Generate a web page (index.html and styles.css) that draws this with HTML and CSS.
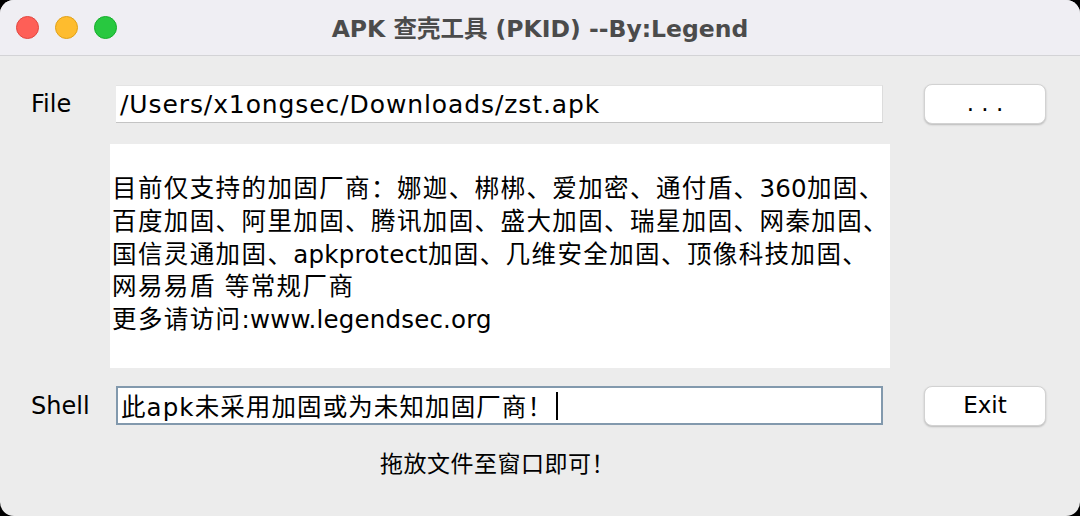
FILE: index.html
```html
<!DOCTYPE html>
<html lang="zh-CN">
<head>
<meta charset="utf-8">
<title>APK 查壳工具 (PKID) --By:Legend</title>
<link rel="stylesheet" href="styles.css">
</head>
<body>
<div class="window">
  <div class="titlebar">
    <div class="lights">
      <span class="light red"></span>
      <span class="light yellow"></span>
      <span class="light green"></span>
    </div>
    <div class="title">APK 查壳工具 (PKID) --By:Legend</div>
  </div>
  <div class="content">
    <div class="label row1">File</div>
    <div class="field row1">/Users/x1ongsec/Downloads/zst.apk</div>
    <div class="btn-cell row1"><button class="btn">. . .</button></div>

    <div class="info">
      <div>目前仅支持的加固厂商：娜迦、梆梆、爱加密、通付盾、<span class="lat">360</span>加固、</div>
      <div>百度加固、阿里加固、腾讯加固、盛大加固、瑞星加固、网秦加固、</div>
      <div>国信灵通加固、<span class="lat">apkprotect</span>加固、几维安全加固、顶像科技加固、</div>
      <div>网易易盾 等常规厂商</div>
      <div>更多请访问<span class="lat">:www.legendsec.org</span></div>
    </div>

    <div class="label row3">Shell</div>
    <div class="field focused row3">此apk未采用加固或为未知加固厂商！<span class="caret"></span></div>
    <div class="btn-cell row3"><button class="btn">Exit</button></div>

    <div class="hint">拖放文件至窗口即可！</div>
  </div>
</div>
</body>
</html>
```

FILE: styles.css
```css
html, body {
  margin: 0;
  padding: 0;
  background: #000;
}
body {
  width: 1080px;
  height: 516px;
  overflow: hidden;
  font-family: "DejaVu Sans", "Noto Sans CJK SC", sans-serif;
  color: #000;
}
.window {
  width: 1080px;
  height: 516px;
  background: #ececec;
  border-radius: 14px;
  overflow: hidden;
  display: flex;
  flex-direction: column;
}
.titlebar {
  height: 56px;
  flex: none;
  background: #efeef3;
  border-bottom: 1px solid #d3d3d6;
  box-sizing: border-box;
  display: flex;
  align-items: center;
  position: relative;
}
.lights {
  display: flex;
  gap: 16px;
  padding-left: 16px;
}
.light {
  width: 23px;
  height: 23px;
  border-radius: 50%;
  box-sizing: border-box;
  display: block;
}
.red { background: #fe5f57; border: 1px solid #e2463f; }
.yellow { background: #febc2e; border: 1px solid #e1a116; }
.green { background: #28c840; border: 1px solid #14ae2a; }
.title {
  position: absolute;
  left: 0;
  right: 0;
  top: 0;
  bottom: 0;
  display: flex;
  align-items: center;
  justify-content: center;
  font-weight: bold;
  font-size: 23.5px;
  color: #4b4b4b;
  padding-bottom: 2px;
  pointer-events: none;
}
.content {
  display: grid;
  grid-template-columns: 116px 767px 1fr;
  grid-template-rows: 42px 224px 40px auto;
  row-gap: 18px;
  padding-top: 28px;
}
.row1 { grid-row: 1; align-self: start; }
.row3 { grid-row: 3; }
.label {
  grid-column: 1;
  height: 40px;
  padding-left: 31px;
  font-size: 24px;
  display: flex;
  align-items: center;
}
.field {
  grid-column: 2;
  height: 38px;
  margin-top: 1px;
  background: #fff;
  border-top: 1px solid #e4e4e4;
  border-right: 1px solid #dcdcdc;
  border-bottom: 1px solid #c4c4c4;
  box-sizing: border-box;
  display: flex;
  align-items: center;
  padding-left: 4px;
  font-size: 25px;
  letter-spacing: 0.9px;
  white-space: nowrap;
}
.field.focused {
  height: 39px;
  margin-top: 0;
  border: 2px solid #8299ad;
  padding-left: 3px;
  font-size: 24.5px;
  letter-spacing: 1.1px;
}
.caret {
  display: inline-block;
  width: 2px;
  height: 28px;
  background: #000;
  margin-left: 3px;
}
.btn-cell {
  grid-column: 3;
  height: 40px;
  padding-left: 41px;
  display: flex;
  align-items: center;
}
.btn {
  width: 122px;
  height: 40px;
  border: 0.5px solid #d2d2d2;
  border-radius: 8px;
  background: #fff;
  box-shadow: 0 1px 2px rgba(0, 0, 0, 0.22);
  font-family: "DejaVu Sans", sans-serif;
  font-size: 23px;
  color: #000;
  padding: 0;
  padding-bottom: 3px;
}
.info {
  grid-column: 2;
  grid-row: 2;
  margin-left: -6px;
  margin-right: -7px;
  background: #fff;
  padding: 29px 0 0 2px;
  font-size: 24.5px;
  line-height: 32.8px;
  letter-spacing: 1.4px;
  white-space: nowrap;
}
.lat {
  letter-spacing: 0.2px;
}
.hint {
  grid-column: 2;
  grid-row: 4;
  text-align: center;
  font-size: 23px;
  letter-spacing: 0.5px;
  padding-right: 4px;
  padding-top: 1px;
  font-family: "Noto Sans CJK SC", sans-serif;
}
```
